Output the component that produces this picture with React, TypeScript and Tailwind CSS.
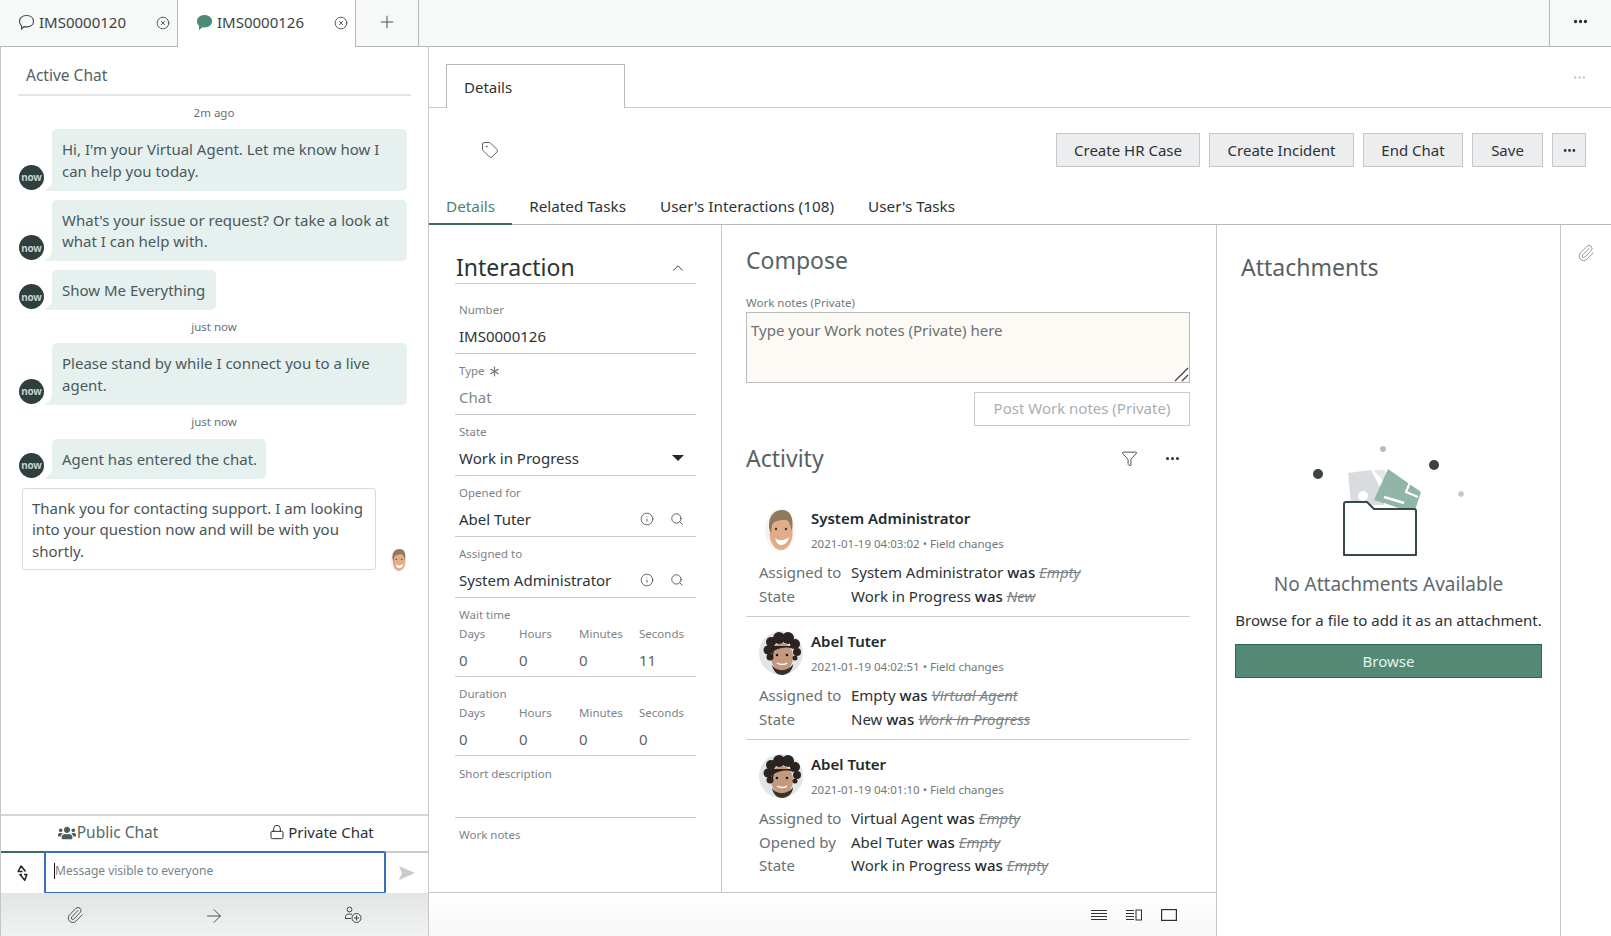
import React from 'react';
import { ArrowRight, Asterisk, ChevronUp, CircleX, Ellipsis, Funnel, Info, Lock, Paperclip, Plus, Search, Tag } from 'lucide-react';
import { FaUsers } from 'react-icons/fa';

// --- little drawings -------------------------------------------------------
const NowLogo = () => (
  <div className="w-[25px] h-[25px] shrink-0 rounded-full bg-[#2f3f40] flex items-center justify-center text-[10px] leading-none font-bold text-[#c6d0cf] tracking-tight">
    now
  </div>
);

const FaceAdmin = ({ size }: { size: number }) => (
  <svg width={size} height={size} viewBox="0 0 44 44" className="shrink-0">
    <ellipse cx="21" cy="22" rx="15" ry="21" fill="#f8f3ee" />
    <ellipse cx="22" cy="25" rx="11.5" ry="17" fill="#e0ac8a" />
    <path d="M10 20 C9 7 16 2 23 2 C32 2 35 10 33 23 L31 17 C30 12 27 11 23 12 C18 13 14 13 13 18 L12 25 Z" fill="#8f7a5e" />
    <path d="M16 30 C19 33 26 33 30 29 C29 35 25 37 22 37 C19 37 17 34 16 30 Z" fill="#fff" />
    <circle cx="17" cy="21" r="1.2" fill="#4a3526" />
    <circle cx="27" cy="21" r="1.2" fill="#4a3526" />
  </svg>
);

const FaceAbel = () => (
  <svg width="44" height="44" viewBox="0 0 44 44" className="shrink-0">
    <circle cx="22" cy="22" r="22" fill="#e2e5e7" />
    <ellipse cx="23" cy="26" rx="11" ry="14" fill="#c49a7e" />
    <g fill="#2b231f">
      <circle cx="12" cy="11" r="5" />
      <circle cx="20" cy="7" r="6" />
      <circle cx="29" cy="7" r="6" />
      <circle cx="36" cy="13" r="5" />
      <circle cx="9" cy="19" r="4.5" />
      <circle cx="38" cy="21" r="4" />
      <circle cx="11" cy="26" r="3.5" />
      <circle cx="36" cy="27" r="2.5" />
      <path d="M12 15 H34 V18 C28 15 20 17 15 20 L13 28 Z" />
    </g>
    <path d="M13 34 C17 41 29 41 34 33 C34 40 28 44 23 44 C18 44 14 40 13 34 Z" fill="#3b2f29" />
    <circle cx="18" cy="24" r="1.3" fill="#22160f" />
    <circle cx="28" cy="24" r="1.3" fill="#22160f" />
    <path d="M18 32 C21 34 26 34 28 32" stroke="#fff" strokeWidth="1.4" fill="none" />
  </svg>
);

const ChatGlyph = ({ filled }: { filled?: boolean }) => (
  <svg width="17" height="17" viewBox="0 0 17 17" className="shrink-0">
    <path
      d="M8.5 1.5 C12.7 1.5 15.5 3.9 15.5 7.2 C15.5 10.5 12.7 12.9 8.5 12.9 C7.6 12.9 6.8 12.8 6 12.6 L3.6 15 L3.6 11.8 C2.2 10.8 1.5 9.1 1.5 7.2 C1.5 3.9 4.3 1.5 8.5 1.5 Z"
      fill={filled ? '#4f8a76' : 'none'}
      stroke={filled ? '#4f8a76' : '#3a4446'}
      strokeWidth="1.1"
    />
  </svg>
);

const NoAttachmentsArt = () => (
  <svg width="160" height="116" viewBox="0 0 160 116" className="block">
    <circle cx="9" cy="29" r="5" fill="#3d4344" />
    <circle cx="125" cy="20" r="5" fill="#3d4344" />
    <circle cx="74" cy="4" r="3" fill="#b9bcbd" />
    <circle cx="152" cy="49" r="2.8" fill="#c4c7c8" />
    <path d="M39 28 L62 25 L72 44 L76 60 L42 60 Z" fill="#d9dcde" />
    <path d="M64 25 L76 25 L78 40 Z" fill="#e4e6e7" />
    <circle cx="54" cy="51" r="5" fill="#fff" />
    <path d="M79 24 L112 47 L105 68 L65 55 Z" fill="#91b5a6" />
    <path d="M102 35 L97 47 L109 52" stroke="#fff" strokeWidth="2.2" fill="none" />
    <path d="M75 52 L95 58 M75 59 L90 65" stroke="#fff" strokeWidth="2.4" />
    <path d="M35 59 C35 58 36 57 37 57 L58 57 L65 64 L105 64 C106 64 107 65 107 66 L107 110 L35 110 Z" fill="#fff" stroke="#37484a" strokeWidth="2" strokeLinejoin="round" />
  </svg>
);

// --- chat column -----------------------------------------------------------
const Timestamp = ({ text, mt }: { text: string; mt: string }) => (
  <div className={`${mt} h-[18px] leading-[18px] text-center text-[11.5px] text-[#687174] pr-[1px]`}>{text}</div>
);

const BotMessage = ({ lines, width, mt }: { lines: string[]; width: string; mt: string }) => (
  <div className={`${mt} flex items-end gap-[8px] pl-[18px]`}>
    <div className="mb-[1px]"><NowLogo /></div>
    <div className={`${width} relative rounded-[5px] rounded-bl-none bg-[#e6f0ee] pl-[10px] pt-[10px] pb-[8.5px] text-[15px] leading-[21.5px] text-[#4a5a5c] whitespace-nowrap`}>
      {lines.map(l => <div key={l}>{l}</div>)}
      <div className="absolute left-[-7px] bottom-0 w-0 h-0 border-b-[7px] border-b-[#e6f0ee] border-l-[7px] border-l-transparent" />
    </div>
  </div>
);

const ChatPanel = () => (
  <div className="w-[429px] shrink-0 border-l border-r border-[#c4c6c7] flex flex-col">
    <div className="mx-[17px] h-[49px] border-b-2 border-[#e2e4e5] pl-[8px] pt-[17px] text-[15.5px] leading-[22px] text-[#566063]">Active Chat</div>
    <Timestamp text="2m ago" mt="mt-[8px]" />
    <BotMessage mt="mt-[7px]" width="w-[355px]" lines={["Hi, I'm your Virtual Agent. Let me know how I", 'can help you today.']} />
    <BotMessage mt="mt-[9px]" width="w-[355px]" lines={["What's your issue or request? Or take a look at", 'what I can help with.']} />
    <BotMessage mt="mt-[9px]" width="w-[164px]" lines={['Show Me Everything']} />
    <Timestamp text="just now" mt="mt-[8px]" />
    <BotMessage mt="mt-[7px]" width="w-[355px]" lines={['Please stand by while I connect you to a live', 'agent.']} />
    <Timestamp text="just now" mt="mt-[8px]" />
    <BotMessage mt="mt-[8px]" width="w-[214px]" lines={['Agent has entered the chat.']} />
    <div className="mt-[9px] pl-[21px] flex items-end gap-[11px]">
      <div className="relative w-[354px] h-[82px] rounded-[3px] border border-[#d9dbdc] px-[9px] pt-[9px] text-[15px] leading-[21.5px] text-[#4a5457] bg-white whitespace-nowrap">
        <div>Thank you for contacting support. I am looking</div>
        <div>into your question now and will be with you</div>
        <div>shortly.</div>
      </div>
      <div className="-mb-[2px] overflow-hidden"><FaceAdmin size={24} /></div>
    </div>
    <div className="flex-1" />
    <div className="h-[37px] border-t-2 border-[#d4d6d7] flex pb-[3px]">
      <div className="w-[214px] flex items-center justify-center gap-[1px] pt-[1px] text-[15.5px] text-[#4f6b64] relative">
        <FaUsers size={18} className="text-[#4a5f5a]" />
        <span>Public Chat</span>
      </div>
      <div className="flex-1 flex items-center justify-center gap-[3px] text-[15px] text-[#2b3134]">
        <Lock size={16} strokeWidth={1.5} />
        <span>Private Chat</span>
      </div>
    </div>
    <div className="h-[1px] flex">
      <div className="w-[214px] bg-[#3f6a5e] h-[2px]" />
      <div className="flex-1 bg-[#c9cbcc] h-[2px]" />
    </div>
    <div className="h-[41px] flex items-center">
      <div className="w-[43px] flex justify-center">
        <svg width="11" height="16" viewBox="0 0 11 16" fill="none" stroke="#22282a" strokeWidth="1.6" strokeLinejoin="round">
          <path d="M4 0.8 L1.2 6.5 L5.6 6.5 M7 9.5 L9.8 9.5 L7.8 15.2 L3 9.5 L5 9.5 M4 0.8 L8.5 6.5" />
        </svg>
      </div>
      <div className="w-[342px] h-[43px] rounded-[2px] border-2 border-[#3a6fbe] bg-white flex items-center pl-[8px] pb-[4px] text-[12px] text-[#7b8385]">
        <span className="inline-block w-[1px] h-[16px] bg-[#111]" />
        <span>Message visible to everyone</span>
      </div>
      <div className="flex-1 flex justify-center">
        <svg width="16" height="14" viewBox="0 0 16 14"><path d="M0 0 L16 7 L0 14 L3 7 Z" fill="#c9cccd" /></svg>
      </div>
    </div>
    <div className="h-[43px] bg-gradient-to-b from-[#e3e4e4] to-[#f1f2f2] flex items-center text-[#3f4649]">
      <div className="w-[148px] flex justify-center"><Paperclip size={18} strokeWidth={1.2} /></div>
      <div className="w-[130px] flex justify-center pt-[2px]"><ArrowRight size={22} strokeWidth={1} /></div>
      <div className="w-[148px] flex justify-center">
        <svg width="18" height="18" viewBox="0 0 18 18" fill="none" stroke="#3f4649" strokeWidth="1">
          <circle cx="5.5" cy="3.5" r="2.4" />
          <path d="M1.5 13 L1.5 10.5 C1.5 9 3 8 5.5 8 L8 8.3 M1.5 12.5 L7 12.5" />
          <circle cx="12.5" cy="12" r="4.5" />
          <path d="M12.5 9.5 L12.5 14.5 M10 12 L15 12" />
        </svg>
      </div>
    </div>
  </div>
);

// --- form column -----------------------------------------------------------
const Field = ({ label, children, muted, required, mt }: { label: string; children: React.ReactNode; muted?: boolean; required?: boolean; mt?: string }) => (
  <div className={`${mt ?? ''} h-[61px] border-b border-[#c8cacb] pt-[8px] px-[4px]`}>
    <div className="h-[18px] leading-[18px] text-[11.5px] text-[#7b8386] flex items-center gap-[1px]">
      {label}
      {required && <Asterisk size={17} strokeWidth={1.8} className="text-[#7b8386]" />}
    </div>
    <div className={`mt-[5px] h-[24px] leading-[24px] text-[15px] flex items-center ${muted ? 'text-[#80888a]' : 'text-[#2b3336]'}`}>{children}</div>
  </div>
);

const ReferenceIcons = () => (
  <span className="ml-auto flex items-center gap-[16px] pr-[8px] text-[#3b4447]">
    <Info size={14} strokeWidth={1.3} />
    <Search size={14} strokeWidth={1.4} />
  </span>
);

const UNITS = ['Days', 'Hours', 'Minutes', 'Seconds'];

const DurationField = ({ title, values }: { title: string; values: string[] }) => (
  <div className="h-[79px] border-b border-[#c8cacb] pt-[8px] px-[4px]">
    <div className="h-[18px] leading-[18px] text-[11.5px] text-[#7b8386]">{title}</div>
    <div className="mt-[1px] grid grid-cols-[60px_60px_60px_60px] h-[18px] leading-[18px] text-[11.5px] text-[#7b8386]">
      {UNITS.map(u => <div key={u}>{u}</div>)}
    </div>
    <div className="mt-[5px] grid grid-cols-[60px_60px_60px_60px] h-[24px] leading-[24px] text-[15px] text-[#5c6568]">
      {values.map((v, i) => <div key={i}>{v}</div>)}
    </div>
  </div>
);

const InteractionColumn = () => (
  <div className="w-[293px] shrink-0 border-r border-[#c4c6c7] pl-[26px] pr-[25px]">
    <div className="h-[59px] border-b border-[#c8cacb] flex items-end">
      <span className="text-[23px] leading-[32px] text-[#2b3336] pl-[1px]">Interaction</span>
      <ChevronUp size={18} strokeWidth={1.2} className="ml-auto mr-[9px] mb-[6px] text-[#2b3336]" />
    </div>
    <Field mt="mt-[9px]" label="Number"><span className="text-[15px]">IMS0000126</span></Field>
    <Field label="Type" muted required>Chat</Field>
    <Field label="State">
      Work in Progress
      <span className="ml-auto mr-[8px] w-0 h-0 border-x-[6px] border-x-transparent border-t-[6px] border-t-[#22282a]" />
    </Field>
    <Field label="Opened for">Abel Tuter<ReferenceIcons /></Field>
    <Field label="Assigned to">System Administrator<ReferenceIcons /></Field>
    <DurationField title="Wait time" values={['0', '0', '0', '11']} />
    <DurationField title="Duration" values={['0', '0', '0', '0']} />
    <div className="h-[62px] border-b border-[#c8cacb] pt-[9px] px-[4px] text-[11.5px] leading-[18px] text-[#7b8386]">Short description</div>
    <div className="pt-[8px] px-[4px] text-[11.5px] leading-[18px] text-[#7b8386]">Work notes</div>
  </div>
);

// --- activity --------------------------------------------------------------
type Change = { field: string; value: string; old: string };

const ActivityEntry = ({ name, date, avatar, changes, last }: { name: string; date: string; avatar: React.ReactNode; changes: Change[]; last?: boolean }) => (
  <div className={`pt-[14px] pb-[8px] ${last ? '' : 'border-b border-[#c8cacb]'}`}>
    <div className="flex gap-[8px] pl-[13px]">
      {avatar}
      <div>
        <div className="text-[15px] leading-[20px] font-semibold text-[#22292c]">{name}</div>
        <div className="mt-[8px] text-[11.5px] leading-[16px] text-[#6f7779]">{date} • Field changes</div>
      </div>
    </div>
    <div className="mt-[9px] pl-[13px]">
      {changes.map(c => (
        <div key={c.field} className="flex h-[23.5px] leading-[23.5px] text-[15px]">
          <div className="w-[92px] text-[#687174]">{c.field}</div>
          <div className="text-[#2b3336]">
            {c.value} <span className="font-medium text-[#22292c]">was</span>{' '}
            <span className="italic line-through text-[#7b8386]">{c.old}</span>
          </div>
        </div>
      ))}
    </div>
  </div>
);

const ComposeColumn = () => (
  <div className="flex-1 pl-[24px] pr-[26px] overflow-hidden">
    <div className="mt-[18px] h-[34px] leading-[34px] text-[23px] text-[#576165]">Compose</div>
    <div className="mt-[17px] h-[18px] leading-[18px] text-[11.5px] text-[#6f7779]">Work notes (Private)</div>
    <div className="relative h-[71px] border border-[#b9bcbd] bg-[#fdfaf5] px-[4px] pt-[5px] text-[15px] leading-[24px] text-[#687174]">
      Type your Work notes (Private) here
      <svg width="16" height="16" viewBox="0 0 16 16" className="absolute right-[0px] bottom-[0px]" stroke="#3a4043" strokeWidth="1.2">
        <path d="M2 15 L15 2 M9 15 L15 9" />
      </svg>
    </div>
    <div className="mt-[9px] flex justify-end">
      <div className="w-[216px] h-[34px] border border-[#c8cacb] text-center leading-[31px] text-[15px] text-[#a9afb1]">Post Work notes (Private)</div>
    </div>
    <div className="mt-[15px] h-[34px] flex items-center text-[#576165]">
      <span className="text-[23px] leading-[34px]">Activity</span>
      <Funnel size={17} strokeWidth={1.2} className="ml-auto mr-[26px] mt-[1px] text-[#2b3336]" />
      <Ellipsis size={17} strokeWidth={2.4} className="mr-[9px] mt-[1px] text-[#2b3336]" />
    </div>
    <div className="mt-[19px]">
      <ActivityEntry
        name="System Administrator"
        date="2021-01-19 04:03:02"
        avatar={<FaceAdmin size={44} />}
        changes={[
          { field: 'Assigned to', value: 'System Administrator', old: 'Empty' },
          { field: 'State', value: 'Work in Progress', old: 'New' },
        ]}
      />
      <ActivityEntry
        name="Abel Tuter"
        date="2021-01-19 04:02:51"
        avatar={<FaceAbel />}
        changes={[
          { field: 'Assigned to', value: 'Empty', old: 'Virtual Agent' },
          { field: 'State', value: 'New', old: 'Work in Progress' },
        ]}
      />
      <ActivityEntry
        last
        name="Abel Tuter"
        date="2021-01-19 04:01:10"
        avatar={<FaceAbel />}
        changes={[
          { field: 'Assigned to', value: 'Virtual Agent', old: 'Empty' },
          { field: 'Opened by', value: 'Abel Tuter', old: 'Empty' },
          { field: 'State', value: 'Work in Progress', old: 'Empty' },
        ]}
      />
    </div>
  </div>
);

const AttachmentsColumn = () => (
  <div className="w-[344px] shrink-0 border-r border-[#c4c6c7] px-[18px]">
    <div className="mt-[25px] pl-[6px] h-[34px] leading-[34px] text-[23px] text-[#576165]">Attachments</div>
    <div className="mt-[161px] flex justify-center"><NoAttachmentsArt /></div>
    <div className="mt-[8px] h-[30px] leading-[30px] text-center text-[19px] text-[#616a6d]">No Attachments Available</div>
    <div className="mt-[9px] h-[24px] leading-[24px] text-center text-[15px] text-[#2b3336] whitespace-nowrap">Browse for a file to add it as an attachment.</div>
    <div className="mt-[12px] h-[34px] border border-[#2f6652] bg-[#548a75] text-center leading-[32px] text-[15px] text-[#e3f5ee]">Browse</div>
  </div>
);

const ActionButton = ({ children, width }: { children: React.ReactNode; width: string }) => (
  <div className={`${width} h-[34px] border border-[#c5c8ca] bg-[#ecedee] flex items-center justify-center text-[15px] text-[#2b3336]`}>{children}</div>
);

const SubTab = ({ children, active }: { children: React.ReactNode; active?: boolean }) => (
  <div className={`px-[17px] h-[39px] leading-[40px] text-[15.3px] ${active ? 'text-[#4f7f70] border-b-2 border-[#3f6a5e] -mb-px' : 'text-[#2b3336]'}`}>{children}</div>
);

const LayoutIcons = () => (
  <div className="flex items-center justify-end gap-[19px] pr-[39px] h-full text-[#2b3336]">
    <svg width="16" height="12" viewBox="0 0 16 12" stroke="currentColor" strokeWidth="1"><path d="M0 1.5 H16 M0 4.5 H16 M0 7.5 H16 M0 10.5 H16" /></svg>
    <svg width="16" height="12" viewBox="0 0 16 12" fill="none" stroke="currentColor" strokeWidth="1"><path d="M0 1.5 H8 M0 4.5 H8 M0 7.5 H8 M0 10.5 H8" /><rect x="10" y="1" width="5.5" height="10" /></svg>
    <svg width="16" height="12" viewBox="0 0 16 12" fill="none" stroke="currentColor" strokeWidth="1.2"><rect x="0.6" y="0.6" width="14.8" height="10.8" /></svg>
  </div>
);

const WorkspaceTab = ({ title, active, filled }: { title: string; active?: boolean; filled?: boolean }) => (
  <div className={`w-[178px] h-[47px] shrink-0 border-r border-[#b5b8ba] flex items-center pl-[18px] pr-[7px] pb-[2px] text-[15px] text-[#3a4446] ${active ? 'bg-white' : ''}`}>
    <ChatGlyph filled={filled} />
    <span className="ml-[4px]">{title}</span>
    <CircleX size={14} strokeWidth={1.3} className="ml-auto text-[#2b3336]" />
  </div>
);

export default function App() {
  return (
    <div className="w-[1611px] h-[936px] overflow-hidden flex flex-col bg-white font-['Noto_Sans',sans-serif]">
      <div className="h-[47px] shrink-0 bg-[#f7f8f8] border-b border-[#b5b8ba] flex items-stretch">
        <WorkspaceTab title="IMS0000120" />
        <WorkspaceTab title="IMS0000126" active filled />
        <div className="w-[63px] border-r border-[#b5b8ba] flex items-center justify-center pb-[3px] text-[#3a4446]">
          <Plus size={20} strokeWidth={1.1} />
        </div>
        <div className="flex-1" />
        <div className="w-[62px] border-l border-[#b5b8ba] flex items-center justify-center pb-[3px] text-[#22282a]">
          <Ellipsis size={17} strokeWidth={2.6} />
        </div>
      </div>
      <div className="flex-1 flex min-h-0">
        <ChatPanel />
        <div className="flex-1 flex flex-col min-w-0">
          <div className="h-[61px] shrink-0 border-b border-[#c8cacb] pl-[17px] pt-[17px] flex items-start">
            <div className="w-[179px] h-[44px] border border-b-0 border-[#b5b8ba] bg-white pl-[17px] leading-[44px] text-[15px] text-[#2b3336]">Details</div>
            <Ellipsis size={15} strokeWidth={2} className="ml-auto mr-[24px] mt-[6px] text-[#c4c7c8]" />
          </div>
          <div className="h-[78px] shrink-0 flex items-center pl-[52px] pr-[25px] pt-[6px] gap-[9px]">
            <Tag size={18} strokeWidth={1.1} className="mr-auto text-[#3f4649]" />
            <ActionButton width="w-[144px]">Create HR Case</ActionButton>
            <ActionButton width="w-[145px]">Create Incident</ActionButton>
            <ActionButton width="w-[100px]">End Chat</ActionButton>
            <ActionButton width="w-[71px]">Save</ActionButton>
            <ActionButton width="w-[34px]"><Ellipsis size={15} strokeWidth={2.6} /></ActionButton>
          </div>
          <div className="h-[39px] shrink-0 border-b border-[#b5b8ba] flex items-start">
            <SubTab active>Details</SubTab>
            <SubTab>Related Tasks</SubTab>
            <SubTab>User's Interactions (108)</SubTab>
            <SubTab>User's Tasks</SubTab>
          </div>
          <div className="flex-1 flex min-h-0">
            <div className="w-[788px] shrink-0 border-r border-[#c4c6c7] flex flex-col">
              <div className="flex-1 flex min-h-0 border-b border-[#c4c6c7]">
                <InteractionColumn />
                <ComposeColumn />
              </div>
              <div className="h-[43px] shrink-0 bg-gradient-to-b from-white to-[#f7f7f7]"><LayoutIcons /></div>
            </div>
            <AttachmentsColumn />
            <div className="flex-1 flex justify-center pt-[19px]">
              <Paperclip size={18} strokeWidth={1.1} className="text-[#7b8386]" />
            </div>
          </div>
        </div>
      </div>
    </div>
  );
}
